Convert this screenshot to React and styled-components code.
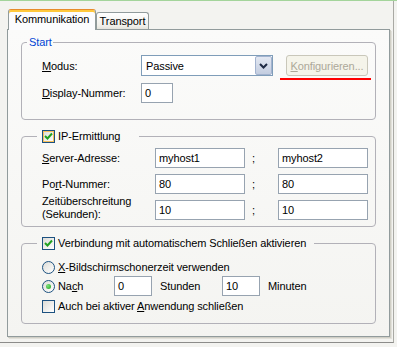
import React from 'react';
import styled, { createGlobalStyle } from 'styled-components';

/* ---------- global ---------- */
const GlobalStyle = createGlobalStyle`
  html, body { margin: 0; padding: 0; background: #f3f3f0; }
  body {
    font-family: "Liberation Sans", Arial, sans-serif;
    font-size: 11px;
    letter-spacing: -0.1px;
    color: #000;
  }
  * { box-sizing: border-box; }
`;

/* ---------- window + tabs ---------- */
const Window = styled.div`
  width: 397px;
  height: 347px;
  background: #f3f3f0;
  border-top: 1px solid #a3d49b;
  overflow: hidden;
`;

const Frame = styled.div`
  width: 394px;
  height: 342px;
  padding: 8px 0 0 7px;
  border-right: 1px solid #a9a9a4;
  border-bottom: 1px solid #8c8c8a;
`;

const TabStrip = styled.div`
  display: flex;
  align-items: flex-end;
  height: 20px;
  padding-left: 1px;
`;

const Tab = styled.div`
  position: relative;
  z-index: ${p => (p.$active ? 2 : 1)};
  width: ${p => p.$w}px;
  height: ${p => (p.$active ? '21px' : '17px')};
  margin-bottom: ${p => (p.$active ? '-1px' : '0')};
  padding-top: ${p => (p.$active ? '3px' : '2px')};
  border: 1px solid #919b9c;
  border-bottom: none;
  border-top-color: ${p => (p.$active ? '#e68b2c' : '#919b9c')};
  border-radius: 3px 3px 0 0;
  background: ${p => (p.$active
    ? '#fcfcfe'
    : 'linear-gradient(#ffffff, #f0efea 80%, #e4e3dc)')};
  box-shadow: ${p => (p.$active ? 'inset 0 2px 0 #ffc83c' : 'none')};
  text-align: center;
  white-space: nowrap;
`;

const Panel = styled.div`
  width: 383px;
  height: 308px;
  padding: 6px 13px 0 13px;
  border: 1px solid #919b9c;
  background: linear-gradient(#fbfbfa, #f4f4f1);
  box-shadow: 1px 1px 0 #d0cfc6, 2px 2px 0 #e2e1da;
  display: flex;
  flex-direction: column;
  gap: 10px;
`;

/* ---------- group boxes ---------- */
const Group = styled.fieldset`
  margin: 0;
  padding: 0;
  min-width: 0;
  border: 1px solid #b2b1b8;
  border-radius: 4px;
`;

const Legend = styled.legend`
  display: flex;
  align-items: center;
  gap: 3px;
  height: 13px;
  line-height: 13px;
  margin-left: ${p => p.$offset}px;
  padding: ${p => p.$pad};
  color: ${p => p.$color || '#000'};
`;

const StartBody = styled.div`
  display: grid;
  grid-template-columns: 86px 132px 82px;
  grid-template-rows: 21px 20px;
  column-gap: 13px;
  row-gap: 7px;
  padding: 6px 0 16px 20px;
  align-items: center;
`;

const AddressBody = styled.div`
  display: grid;
  grid-template-columns: 113px 90px 33px 90px;
  grid-template-rows: repeat(3, 20px);
  row-gap: 6px;
  padding: 5px 0 6px 20px;
  align-items: center;
`;

const LockBody = styled.div`
  display: flex;
  flex-direction: column;
  padding: 9px 0 10px 20px;
`;

const OptionRow = styled.div`
  display: flex;
  align-items: center;
  height: ${p => p.$h}px;
  margin-top: ${p => p.$mt || 0}px;
`;

/* ---------- controls ---------- */
const Label = styled.span`
  white-space: nowrap;
  flex: none;
  width: ${p => (p.$w ? `${p.$w}px` : 'auto')};
  padding-left: ${p => p.$pl || 0}px;
`;

const TwoLineLabel = styled.span`
  line-height: 13px;
  align-self: center;
  margin-top: -4px;
`;

const Key = styled.span`
  text-decoration: underline;
  text-underline-offset: 1px;
`;

const TextBox = styled.div`
  width: ${p => p.$w}px;
  height: 20px;
  border: 1px solid #97a3b0;
  background: #fff;
  padding-left: 3px;
  display: flex;
  align-items: center;
  flex: none;
`;

const Sep = styled.span`
  padding-left: 7px;
`;

const SelectBox = styled.div`
  width: 132px;
  height: 21px;
  border: 1px solid #7f9db9;
  background: #fff;
  display: flex;
  align-items: center;
  justify-content: space-between;
  padding-left: 4px;
`;

const DropButton = styled.span`
  width: 17px;
  height: 19px;
  display: flex;
  align-items: center;
  justify-content: center;
  border: 1px solid #a3b3cf;
  border-radius: 2px;
  background: linear-gradient(#e3e8f2, #c3cde0);
`;

const ButtonWrap = styled.div`
  position: relative;
  &::after {
    content: '';
    position: absolute;
    left: -6px;
    right: -3px;
    bottom: -4px;
    height: 2px;
    background: #f00;
  }
`;

const DisabledButton = styled.div`
  width: 82px;
  height: 21px;
  border: 1px solid #c9c7ba;
  border-radius: 3px;
  background: #f5f4ea;
  color: #aca899;
  display: flex;
  align-items: center;
  justify-content: center;
`;

const Box = styled.span`
  width: 13px;
  height: 13px;
  flex: none;
  border: 1px solid #1c5180;
  background: linear-gradient(135deg, #dcdcd7, #ffffff);
  box-shadow: ${p => (p.$hot ? 'inset 0 0 0 1px #f8c05a' : 'none')};
  display: flex;
  align-items: center;
  justify-content: center;
`;

const Radio = styled.span`
  width: 13px;
  height: 13px;
  flex: none;
  border: 1px solid #1c5180;
  border-radius: 50%;
  background: linear-gradient(135deg, #dcdcd7, #ffffff);
  display: flex;
  align-items: center;
  justify-content: center;
  &::after {
    content: '';
    width: 5px;
    height: 5px;
    border-radius: 50%;
    background: ${p => (p.$checked
      ? 'radial-gradient(circle at 35% 35%, #7be37b, #21a121)'
      : 'transparent')};
  }
`;

const ChoiceText = styled.span`
  margin-left: 3px;
  white-space: nowrap;
  flex: none;
  width: ${p => (p.$w ? `${p.$w}px` : 'auto')};
`;

const CheckMark = () => (
  <svg width="9" height="9" viewBox="0 0 9 9">
    <path d="M1 4 L3.5 6.5 L8 1.5" fill="none" stroke="#21a121" strokeWidth="2" />
  </svg>
);

const Chevron = () => (
  <svg width="9" height="6" viewBox="0 0 9 6">
    <path d="M1 1 L4.5 4.5 L8 1" fill="none" stroke="#1e2a44" strokeWidth="2" />
  </svg>
);

const CheckBox = ({ checked, hot }) => (
  <Box $hot={hot}>{checked && <CheckMark />}</Box>
);

/* ---------- page ---------- */
export default function App() {
  return (
    <>
      <GlobalStyle />
      <Window>
        <Frame>
          <TabStrip>
            <Tab $active $w={88}>Kommunikation</Tab>
            <Tab $w={53}>Transport</Tab>
          </TabStrip>

          <Panel>
            <Group>
              <Legend $offset={5} $pad="0 1px 0 2px" $color="#0046d5">Start</Legend>
              <StartBody>
                <Label><Key>M</Key>odus:</Label>
                <SelectBox>
                  Passive
                  <DropButton><Chevron /></DropButton>
                </SelectBox>
                <ButtonWrap>
                  <DisabledButton><Key>K</Key>onfigurieren...</DisabledButton>
                </ButtonWrap>

                <Label><Key>D</Key>isplay-Nummer:</Label>
                <TextBox $w={32}>0</TextBox>
              </StartBody>
            </Group>

            <Group>
              <Legend $offset={15} $pad="0 19px 0 5px">
                <CheckBox checked hot />
                <span>IP-Ermittlung</span>
              </Legend>
              <AddressBody>
                <Label><Key>S</Key>erver-Adresse:</Label>
                <TextBox $w={90}>myhost1</TextBox>
                <Sep>;</Sep>
                <TextBox $w={90}>myhost2</TextBox>

                <Label>Po<Key>r</Key>t-Nummer:</Label>
                <TextBox $w={90}>80</TextBox>
                <Sep>;</Sep>
                <TextBox $w={90}>80</TextBox>

                <TwoLineLabel>Zeitüberschreitung<br />(Sekunden):</TwoLineLabel>
                <TextBox $w={90}>10</TextBox>
                <Sep>;</Sep>
                <TextBox $w={90}>10</TextBox>
              </AddressBody>
            </Group>

            <Group>
              <Legend $offset={15} $pad="0 8px 0 5px">
                <CheckBox checked />
                <span>Verbindung mit automatischem Schließen aktivieren</span>
              </Legend>
              <LockBody>
                <OptionRow $h={16}>
                  <Radio />
                  <ChoiceText><Key>X</Key>-Bildschirmschonerzeit verwenden</ChoiceText>
                </OptionRow>
                <OptionRow $h={20} $mt={1}>
                  <Radio $checked />
                  <ChoiceText $w={56}>Na<Key>c</Key>h</ChoiceText>
                  <TextBox $w={38}>0</TextBox>
                  <Label $w={70} $pl={8}>Stunden</Label>
                  <TextBox $w={38}>10</TextBox>
                  <Label $pl={8}>Minuten</Label>
                </OptionRow>
                <OptionRow $h={14} $mt={3}>
                  <CheckBox />
                  <ChoiceText>Auch bei aktiver <Key>A</Key>nwendung schließen</ChoiceText>
                </OptionRow>
              </LockBody>
            </Group>
          </Panel>
        </Frame>
      </Window>
    </>
  );
}
